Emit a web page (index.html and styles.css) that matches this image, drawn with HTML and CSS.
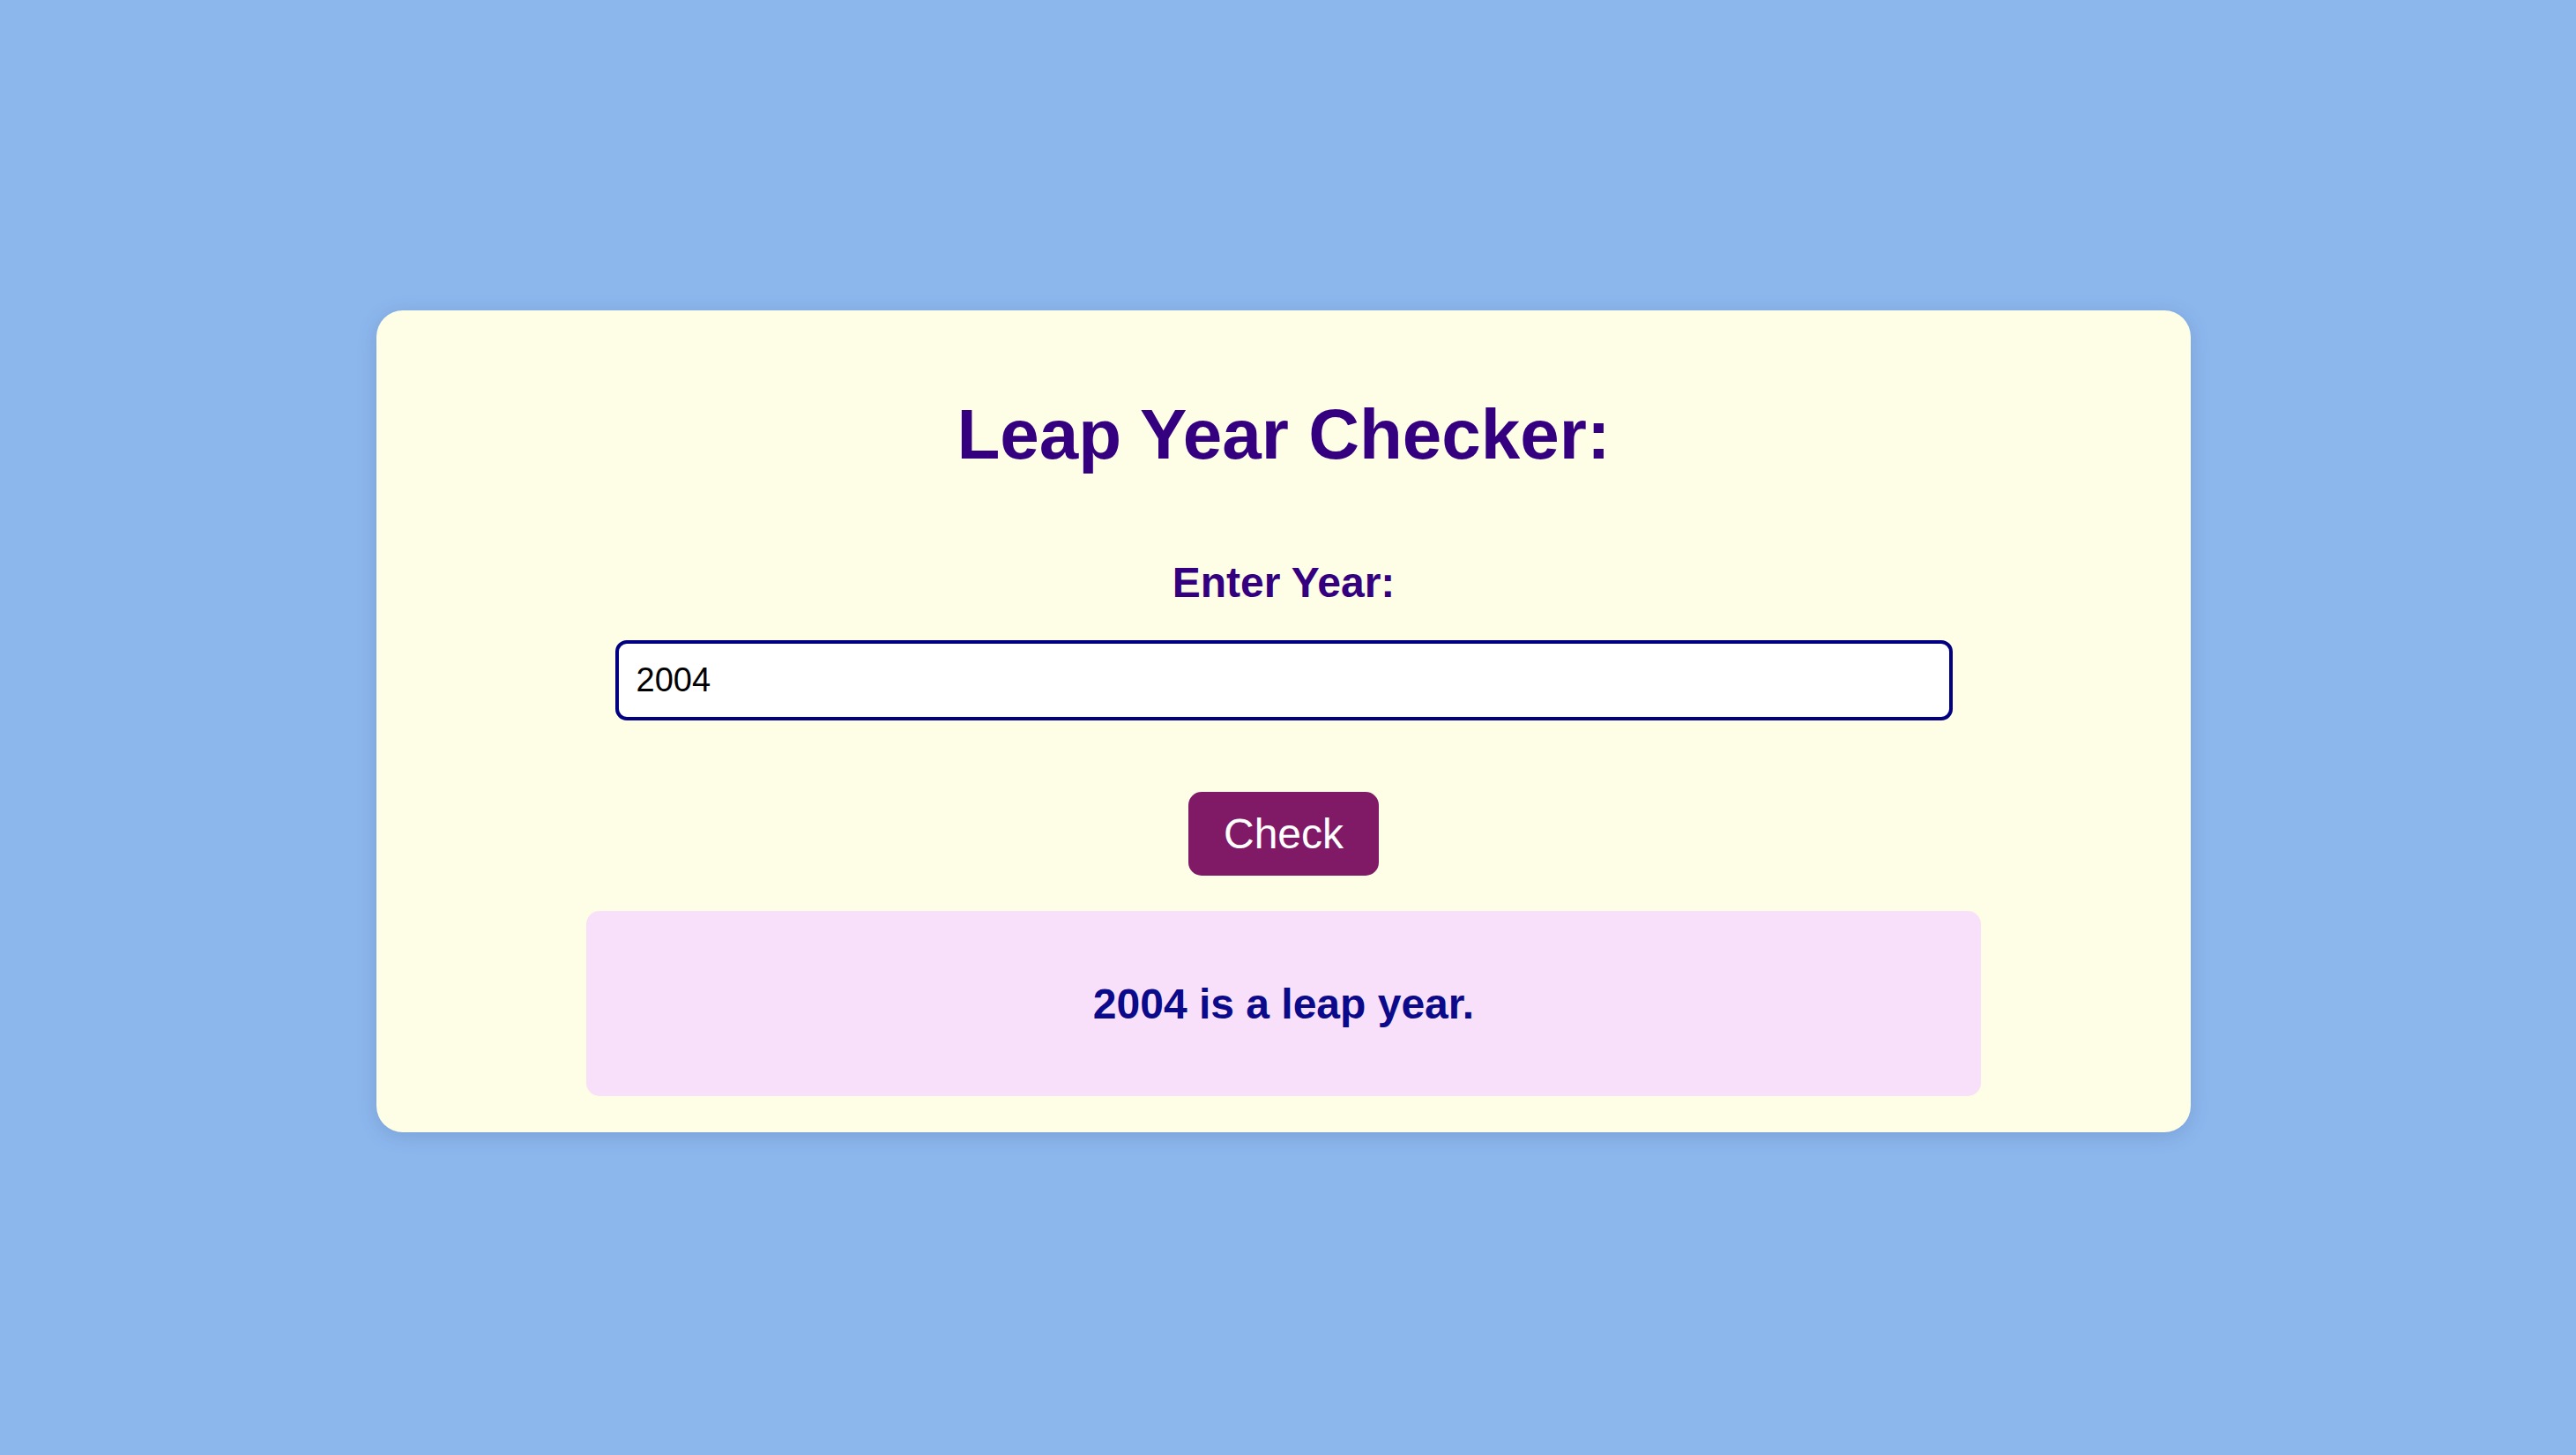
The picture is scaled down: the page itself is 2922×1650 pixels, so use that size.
FILE: index.html
```html
<!DOCTYPE html>
<html lang="en">
<head>
<meta charset="utf-8">
<title>Leap Year Checker</title>
<link rel="stylesheet" href="styles.css">
</head>
<body>
<main class="page">
  <section class="card">
    <h1 class="title">Leap Year Checker:</h1>
    <label class="label" for="year">Enter Year:</label>
    <input class="year-input" id="year" type="text" value="2004">
    <button class="check-btn" type="button">Check</button>
    <div class="result">
      <p class="result-text">2004 is a leap year.</p>
    </div>
  </section>
</main>
</body>
</html>
```

FILE: styles.css
```css
* { box-sizing: border-box; }

html, body {
  margin: 0;
  padding: 0;
  background: #8cb7ed;
}

body {
  font-family: "Liberation Sans", Arial, Helvetica, sans-serif;
}

.page {
  height: 1650px;
  display: flex;
  align-items: center;
  justify-content: center;
  padding: 0 10px 14px 0;
}

.card {
  width: 2058px;
  height: 932px;
  background: #fefee6;
  border-radius: 30px;
  box-shadow: 0 4px 22px rgba(40, 60, 110, 0.18);
  display: flex;
  flex-direction: column;
  align-items: center;
  padding-top: 95px;
}

.title {
  margin: 0;
  font-size: 80px;
  font-weight: bold;
  color: #35007f;
  line-height: 92px;
}

.label {
  margin-top: 94px;
  font-size: 48px;
  font-weight: bold;
  color: #35007f;
  line-height: 55px;
}

.year-input {
  margin-top: 38px;
  width: 1517px;
  height: 91px;
  border: 4px solid #000080;
  border-radius: 13px;
  background: #ffffff;
  padding: 0 20px;
  font-family: "Liberation Sans", Arial, Helvetica, sans-serif;
  font-size: 38px;
  color: #000000;
  outline: none;
}

.check-btn {
  margin-top: 81px;
  width: 216px;
  height: 95px;
  border: none;
  border-radius: 15px;
  background: #801a67;
  color: #ffffff;
  font-family: "Liberation Sans", Arial, Helvetica, sans-serif;
  font-size: 48px;
  padding: 0;
  cursor: pointer;
}

.result {
  margin-top: 40px;
  width: 1582px;
  height: 210px;
  border-radius: 15px;
  background: #f8e0fa;
  display: flex;
  align-items: center;
  justify-content: center;
}

.result-text {
  margin: 0;
  font-size: 48px;
  font-weight: bold;
  color: #0a0a8a;
  line-height: 55px;
}
```
